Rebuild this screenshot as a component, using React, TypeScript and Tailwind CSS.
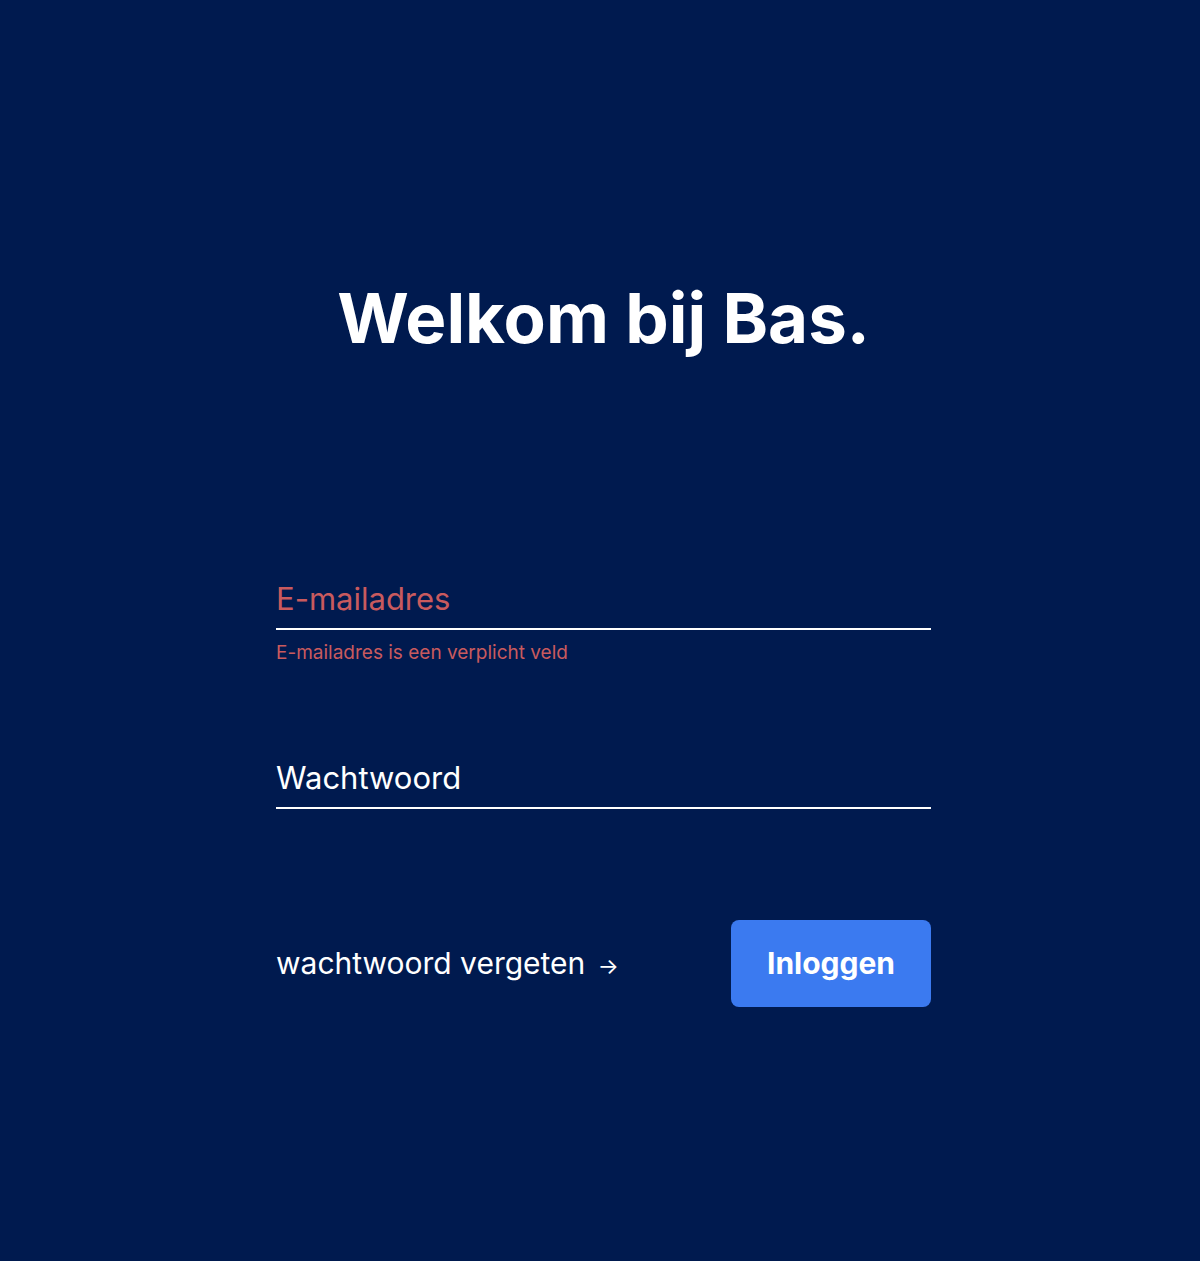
import React from 'react';

const App: React.FC = () => {
  return (
    <div className="flex min-h-[1261px] w-full justify-center bg-[#001a4f] pl-[7px] font-['Inter',sans-serif]">
      <div className="flex w-[655px] flex-col">
        <h1 className="mt-[278px] text-center text-[69px] font-bold leading-[80px] text-white">
          Welkom bij Bas.
        </h1>
        <form className="mt-[220px] flex flex-col">
          <div className="flex flex-col">
            <input
              type="email"
              placeholder="E-mailadres"
              className="h-[52px] w-full border-b-2 border-white bg-transparent pb-[10px] text-[31px] text-white outline-none placeholder:text-[#c95a5e]"
            />
            <span className="mt-[11px] text-[19px] leading-[24px] text-[#c95a5e]">
              E-mailadres is een verplicht veld
            </span>
          </div>
          <div className="mt-[92px] flex flex-col">
            <input
              type="password"
              placeholder="Wachtwoord"
              className="h-[52px] w-full border-b-2 border-white bg-transparent pb-[10px] text-[31px] text-white outline-none placeholder:text-white"
            />
          </div>
          <div className="mt-[111px] flex items-center justify-between">
            <a href="#" className="text-[30px] text-white">
              wachtwoord vergeten <span className="ml-1 text-[22px]">→</span>
            </a>
            <button
              type="button"
              className="h-[87px] w-[200px] rounded-[8px] bg-[#3b7af0] text-[30px] font-bold text-white"
            >
              Inloggen
            </button>
          </div>
        </form>
      </div>
    </div>
  );
};

export default App;
